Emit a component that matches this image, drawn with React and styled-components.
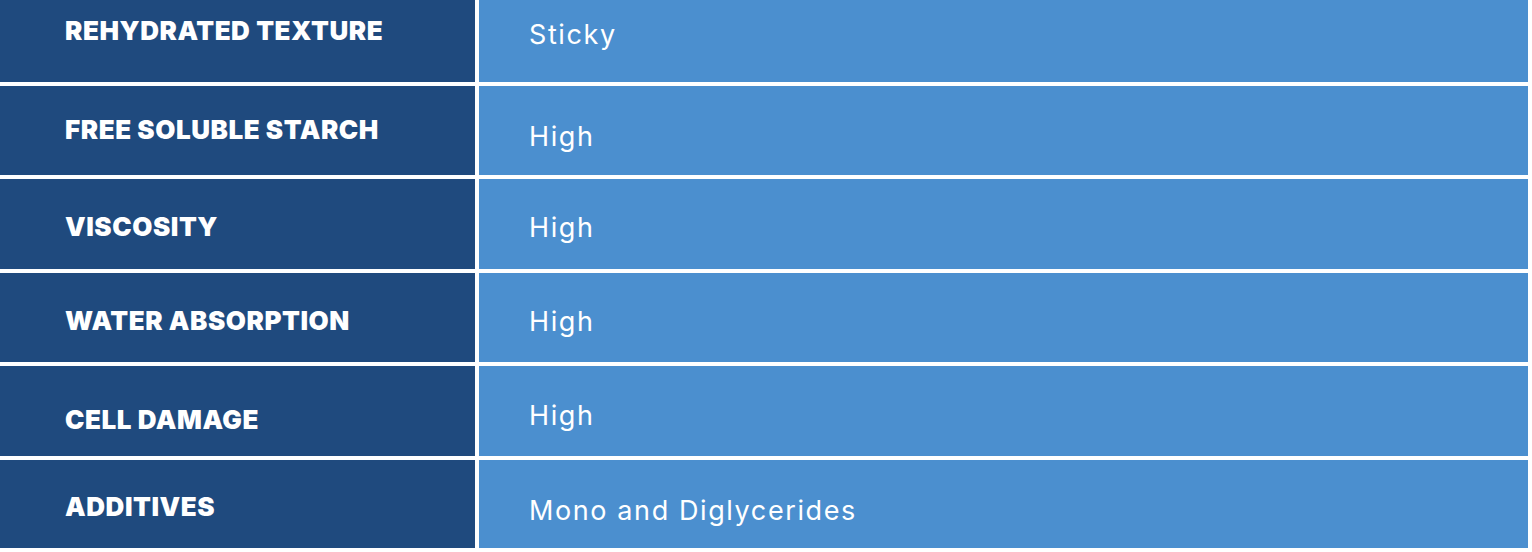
import { Fragment } from "react";
import styled, { createGlobalStyle } from "styled-components";

const GlobalStyle = createGlobalStyle`
  html, body {
    margin: 0;
    padding: 0;
    background: #ffffff;
  }
  body {
    font-family: Inter, "Open Sans", sans-serif;
  }
`;

const Table = styled.div`
  display: grid;
  grid-template-columns: 475px 1049px;
  grid-template-rows: 82px 89px 90px 89px 90px 88px;
  column-gap: 4px;
  row-gap: 4px;
  width: 1528px;
`;

const LabelCell = styled.div`
  display: flex;
  align-items: center;
  padding-left: 65px;
  background: #1f4a7e;
  color: #ffffff;
  font-size: 26px;
  font-weight: 900;
  letter-spacing: 0.55px;
  text-transform: uppercase;
  white-space: nowrap;
`;

const ValueCell = styled.div`
  display: flex;
  align-items: center;
  padding-left: 50px;
  background: #4b8fcf;
  color: #ffffff;
  font-size: 27px;
  font-weight: 400;
  letter-spacing: 1.6px;
  white-space: nowrap;
`;

const Text = styled.span`
  transform: translateY(${(p) => p.$shift}px);
`;

const rows = [
  { label: "Rehydrated Texture", value: "Sticky", ls: -11, vs: -7 },
  { label: "Free Soluble Starch", value: "High", ls: -1, vs: 6 },
  { label: "Viscosity", value: "High", ls: 2, vs: 3 },
  { label: "Water Absorption", value: "High", ls: 3, vs: 4 },
  { label: "Cell Damage", value: "High", ls: 8, vs: 4 },
  { label: "Additives", value: "Mono and Diglycerides", ls: 2, vs: 6 },
];

export default function App() {
  return (
    <>
      <GlobalStyle />
      <Table>
        {rows.map((row) => (
          <Fragment key={row.label}>
            <LabelCell>
              <Text $shift={row.ls}>{row.label}</Text>
            </LabelCell>
            <ValueCell>
              <Text $shift={row.vs}>{row.value}</Text>
            </ValueCell>
          </Fragment>
        ))}
      </Table>
    </>
  );
}
